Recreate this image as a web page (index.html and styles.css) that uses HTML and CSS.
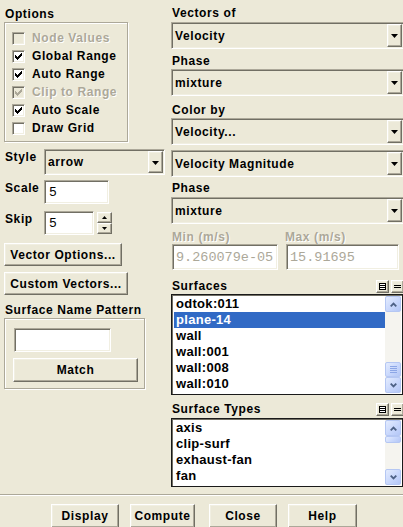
FILE: index.html
```html
<!DOCTYPE html>
<html>
<head>
<meta charset="utf-8">
<link rel="stylesheet" href="styles.css">
</head>
<body>
<div class="win">
  <div class="main">
    <div class="left">
      <div class="lbl lbl-options">Options</div>
      <div class="group opts">
        <div class="chk disabled"><span class="box"></span><span>Node Values</span></div>
        <div class="chk"><span class="box"><svg width="7" height="7" viewBox="0 0 7 7"><path d="M0 2h1v3H0zM1 3h1v3H1zM2 4h1v3H2zM3 3h1v3H3zM4 2h1v3H4zM5 1h1v3H5zM6 0h1v3H6z"/></svg></span><span>Global Range</span></div>
        <div class="chk"><span class="box"><svg width="7" height="7" viewBox="0 0 7 7"><path d="M0 2h1v3H0zM1 3h1v3H1zM2 4h1v3H2zM3 3h1v3H3zM4 2h1v3H4zM5 1h1v3H5zM6 0h1v3H6z"/></svg></span><span>Auto Range</span></div>
        <div class="chk disabled"><span class="box"><svg width="7" height="7" viewBox="0 0 7 7"><path d="M0 2h1v3H0zM1 3h1v3H1zM2 4h1v3H2zM3 3h1v3H3zM4 2h1v3H4zM5 1h1v3H5zM6 0h1v3H6z"/></svg></span><span>Clip to Range</span></div>
        <div class="chk"><span class="box"><svg width="7" height="7" viewBox="0 0 7 7"><path d="M0 2h1v3H0zM1 3h1v3H1zM2 4h1v3H2zM3 3h1v3H3zM4 2h1v3H4zM5 1h1v3H5zM6 0h1v3H6z"/></svg></span><span>Auto Scale</span></div>
        <div class="chk"><span class="box"></span><span>Draw Grid</span></div>
      </div>

      <div class="row row-style">
        <span class="lbl rlbl">Style</span>
        <div class="select sel-style"><span class="sel-text">arrow</span><span class="arrow raised"><svg width="7" height="4" viewBox="0 0 7 4"><path d="M0 0h7L3.5 4z"/></svg></span></div>
      </div>
      <div class="row row-scale">
        <span class="lbl rlbl">Scale</span>
        <div class="entry ent-scale">5</div>
      </div>
      <div class="row row-skip">
        <span class="lbl rlbl">Skip</span>
        <div class="entry ent-skip">5</div>
        <div class="spin">
          <span class="spin-b raised"><svg width="5" height="3" viewBox="0 0 5 3"><path d="M2.5 0L5 3H0z"/></svg></span>
          <span class="spin-b raised"><svg width="5" height="3" viewBox="0 0 5 3"><path d="M0 0h5L2.5 3z"/></svg></span>
        </div>
      </div>
      <button class="btn raised btn-vec">Vector Options...</button>
      <button class="btn raised btn-cust">Custom Vectors...</button>
      <div class="lbl lbl-pattern">Surface Name Pattern</div>
      <div class="group pattern">
        <div class="entry ent-pattern"></div>
        <button class="btn raised btn-match">Match</button>
      </div>
    </div>

    <div class="right">
      <div class="lbl rl rl-1">Vectors of</div>
      <div class="select sel-1"><span class="sel-text">Velocity</span><span class="arrow raised"><svg width="7" height="4" viewBox="0 0 7 4"><path d="M0 0h7L3.5 4z"/></svg></span></div>
      <div class="lbl rl rl-2">Phase</div>
      <div class="select sel-2"><span class="sel-text">mixture</span><span class="arrow raised"><svg width="7" height="4" viewBox="0 0 7 4"><path d="M0 0h7L3.5 4z"/></svg></span></div>
      <div class="lbl rl rl-3">Color by</div>
      <div class="select sel-3"><span class="sel-text">Velocity...</span><span class="arrow raised"><svg width="7" height="4" viewBox="0 0 7 4"><path d="M0 0h7L3.5 4z"/></svg></span></div>
      <div class="select sel-4"><span class="sel-text">Velocity Magnitude</span><span class="arrow raised"><svg width="7" height="4" viewBox="0 0 7 4"><path d="M0 0h7L3.5 4z"/></svg></span></div>
      <div class="lbl rl rl-4">Phase</div>
      <div class="select sel-5"><span class="sel-text">mixture</span><span class="arrow raised"><svg width="7" height="4" viewBox="0 0 7 4"><path d="M0 0h7L3.5 4z"/></svg></span></div>
      <div class="minmax-l">
        <span class="lbl dis-text">Min (m/s)</span>
        <span class="lbl dis-text">Max (m/s)</span>
      </div>
      <div class="minmax">
        <div class="entry mono ent-min">9.260079e-05</div>
        <div class="entry mono ent-max">15.91695</div>
      </div>

      <div class="list-head lh-1">
        <span class="lbl">Surfaces</span>
        <span class="mini raised"><svg width="7" height="7" viewBox="0 0 7 7"><path d="M0 0h7v7H0z" fill="#000"/><path d="M1 1h5v1H1zM1 3h5v1H1zM1 5h5v1H1z" fill="#fff"/></svg></span>
        <span class="mini raised"><svg width="7" height="5" viewBox="0 0 7 5"><path d="M0 1h7v1H0zM0 3h7v1H0z"/></svg></span>
      </div>
      <div class="list list-1">
        <div class="items">
          <div class="item">odtok:011</div>
          <div class="item sel">plane-14</div>
          <div class="item">wall</div>
          <div class="item">wall:001</div>
          <div class="item">wall:008</div>
          <div class="item">wall:010</div>
        </div>
        <div class="sb">
          <span class="sbb"><svg width="7" height="5" viewBox="0 0 7 5"><polyline points="0.7,4.3 3.5,1.5 6.3,4.3" fill="none" stroke="#4d6185" stroke-width="1.8"/></svg></span>
          <span class="track t1"></span>
          <span class="sbb thumb th1"><svg width="7" height="7" viewBox="0 0 7 7"><path d="M0 0h7v1H0zM0 2h7v1H0zM0 4h7v1H0zM0 6h7v1H0z" fill="#8ca6e6"/></svg></span>
          <span class="sbb"><svg width="7" height="5" viewBox="0 0 7 5"><polyline points="0.7,0.7 3.5,3.5 6.3,0.7" fill="none" stroke="#4d6185" stroke-width="1.8"/></svg></span>
        </div>
      </div>

      <div class="list-head lh-2">
        <span class="lbl">Surface Types</span>
        <span class="mini raised"><svg width="7" height="7" viewBox="0 0 7 7"><path d="M0 0h7v7H0z" fill="#000"/><path d="M1 1h5v1H1zM1 3h5v1H1zM1 5h5v1H1z" fill="#fff"/></svg></span>
        <span class="mini raised"><svg width="7" height="5" viewBox="0 0 7 5"><path d="M0 1h7v1H0zM0 3h7v1H0z"/></svg></span>
      </div>
      <div class="list list-2">
        <div class="items">
          <div class="item">axis</div>
          <div class="item">clip-surf</div>
          <div class="item">exhaust-fan</div>
          <div class="item">fan</div>
        </div>
        <div class="sb">
          <span class="sbb"><svg width="7" height="5" viewBox="0 0 7 5"><polyline points="0.7,4.3 3.5,1.5 6.3,4.3" fill="none" stroke="#4d6185" stroke-width="1.8"/></svg></span>
          <span class="sbb thumb th2"></span>
          <span class="track t2"></span>
          <span class="sbb"><svg width="7" height="5" viewBox="0 0 7 5"><polyline points="0.7,0.7 3.5,3.5 6.3,0.7" fill="none" stroke="#4d6185" stroke-width="1.8"/></svg></span>
        </div>
      </div>
    </div>
  </div>

  <div class="footer">
    <button class="btn raised fb fb-display">Display</button>
    <button class="btn raised fb fb-compute">Compute</button>
    <button class="btn raised fb fb-close">Close</button>
    <button class="btn raised fb fb-help">Help</button>
  </div>
</div>
</body>
</html>
```

FILE: styles.css
```css
html, body {
  margin: 0;
  padding: 0;
  background: #ece9d8;
}
body {
  font-family: "Liberation Sans", Arial, sans-serif;
  font-weight: bold;
  font-size: 12px;
  letter-spacing: 0.6px;
  color: #000;
}
.win {
  width: 403px;
  height: 527px;
  overflow: hidden;
  background: #ece9d8;
}
.main {
  display: flex;
  height: 494px;
}
.left {
  width: 171px;
  flex-shrink: 0;
  box-sizing: border-box;
  padding-left: 4px;
  display: flex;
  flex-direction: column;
  align-items: flex-start;
}
.right {
  width: 233px;
  flex-shrink: 0;
  display: flex;
  flex-direction: column;
}
.lbl {
  display: block;
  height: 14px;
  line-height: 14px;
  white-space: nowrap;
}

/* 3D styles */
.raised {
  box-sizing: border-box;
  background: #ece9d8;
  border: 1px solid;
  border-color: #fff #716f64 #716f64 #fff;
  box-shadow: inset -1px -1px 0 #aca899, inset 1px 1px 0 #f1efe2;
}
.sunken {
  border: 1px solid;
  border-color: #aca899 #fff #fff #aca899;
}

/* group boxes */
.group {
  box-sizing: border-box;
  border: 1px solid #aca899;
  box-shadow: inset 1px 1px 0 #fff, 1px 1px 0 #fff;
}
.lbl-options { margin-top: 7px; margin-left: 1px; }
.opts {
  margin-top: 1px;
  width: 124px;
  height: 120px;
  padding: 6px 0 0 7px;
}
.chk {
  display: flex;
  align-items: center;
  height: 18px;
  white-space: nowrap;
}
.chk .box {
  box-sizing: border-box;
  width: 13px;
  height: 13px;
  margin-right: 7px;
  background: #fff;
  border: 1px solid;
  border-color: #aca899 #fff #fff #aca899;
  box-shadow: inset 1px 1px 0 #716f64, inset -1px -1px 0 #f1efe2;
  display: flex;
  align-items: center;
  justify-content: center;
}
.chk .box svg { fill: #000; display: block; }
.chk.disabled { color: #aca899; text-shadow: 1px 1px 0 #fff; }
.chk.disabled .box { background: #ece9d8; }
.chk.disabled .box svg { fill: #aca899; }

/* rows on the left */
.row {
  display: flex;
  align-items: flex-start;
}
.rlbl { width: 40px; margin-top: 1px; padding-left: 1px; box-sizing: border-box; }
.row-style { margin-top: 7px; }
.row-scale { margin-top: 5px; }
.row-skip { margin-top: 7px; }

/* selects */
.select {
  box-sizing: border-box;
  height: 27px;
  border: 1px solid;
  border-color: #aca899 #fff #fff #aca899;
  box-shadow: inset 1px 1px 0 #716f64, inset -1px -1px 0 #f1efe2;
  padding: 1px;
  display: flex;
  align-items: stretch;
  background: #ece9d8;
}
.sel-text {
  flex: 1;
  display: flex;
  align-items: center;
  padding-left: 2px;
  white-space: nowrap;
  overflow: hidden;
}
.arrow {
  width: 15px;
  display: flex;
  align-items: center;
  justify-content: center;
  padding-top: 1px;
}
.arrow svg { display: block; fill: #000; }
.sel-style { width: 121px; height: 26px; }

/* entries */
.entry {
  box-sizing: border-box;
  background: #fff;
  border: 1px solid;
  border-color: #aca899 #fff #fff #aca899;
  box-shadow: inset 1px 1px 0 #716f64, inset -1px -1px 0 #f1efe2;
  font-family: "Liberation Mono", "Courier New", monospace;
  font-weight: normal;
  font-size: 13px;
  letter-spacing: 0;
  padding-left: 4px;
  display: flex;
  align-items: center;
}
.ent-scale { width: 65px; height: 24px; }
.ent-skip { width: 50px; height: 24px; }
.spin {
  margin-left: 3px;
  margin-top: 1px;
  display: flex;
  flex-direction: column;
}
.spin-b {
  width: 15px;
  height: 11px;
  display: flex;
  align-items: center;
  justify-content: center;
}
.spin-b svg { display: block; fill: #000; }

/* buttons */
.btn {
  font: inherit;
  letter-spacing: inherit;
  color: #000;
  padding: 0;
  margin: 0;
  text-align: center;
  line-height: 14px;
  white-space: nowrap;
}
.btn-vec { margin-top: 8px; width: 118px; height: 23px; }
.btn-cust { margin-top: 6px; width: 124px; height: 23px; }
.lbl-pattern { margin-top: 8px; margin-left: 1px; }
.pattern {
  margin-top: 1px;
  width: 141px;
  height: 71px;
  padding: 9px 0 0 8px;
  display: flex;
  flex-direction: column;
  align-items: flex-start;
}
.ent-pattern { width: 97px; height: 24px; margin-left: 1px; }
.btn-match { margin-top: 6px; width: 125px; height: 24px; }

/* right column */
.rl { padding-left: 1px; }
.rl-1 { margin-top: 6px; }
.sel-1 { margin-top: 2px; }
.rl-2 { margin-top: 5px; }
.sel-2 { margin-top: 1px; }
.rl-3 { margin-top: 7px; }
.sel-3 { margin-top: 1px; }
.sel-4 { margin-top: 5px; }
.rl-4 { margin-top: 4px; }
.sel-5 { margin-top: 2px; }

.dis-text { color: #aca899; text-shadow: 1px 1px 0 #fff; }
.minmax-l {
  margin-top: 6px;
  display: grid;
  grid-template-columns: 113px 1fr;
  padding-left: 1px;
}
.minmax {
  display: grid;
  grid-template-columns: 106px 113px;
  column-gap: 8px;
  padding-left: 1px;
}
.minmax .entry { height: 26px; color: #aca899; padding-left: 3px; font-size: 13.5px; }

.list-head {
  display: flex;
  align-items: flex-start;
  height: 14px;
}
.list-head .lbl { flex: 1; padding-left: 1px; }
.lh-1 { margin-top: 9px; }
.lh-2 { margin-top: 7px; }
.mini {
  width: 13px;
  height: 13px;
  margin-top: 1px;
  margin-right: 2px;
  display: flex;
  align-items: center;
  justify-content: center;
}
.mini svg { display: block; }
.mini:last-child { margin-right: 0; }

.list {
  box-sizing: border-box;
  border: 1px solid #1a1a1a;
  box-shadow: inset 1px 1px 0 #716f64;
  background: #fff;
  padding: 1px 1px 1px 1px;
  display: flex;
  width: 232px;
}
.list-1 { margin-top: 1px; height: 101px; }
.list-2 { margin-top: 2px; height: 69px; }
.items {
  flex: 1;
  padding-left: 1px;
  overflow: hidden;
}
.item {
  height: 16px;
  line-height: 16px;
  padding-left: 2px;
  font-size: 13px;
  letter-spacing: 0.3px;
  white-space: nowrap;
}
.item.sel { background: #316ac5; color: #fff; }

.sb {
  width: 16px;
  display: flex;
  flex-direction: column;
  background: #f5f4ef;
}
.sbb {
  box-sizing: border-box;
  height: 16px;
  flex-shrink: 0;
  border: 1px solid #b5c7f3;
  border-radius: 2px;
  background: linear-gradient(135deg, #e4ecfe 0%, #c8d7fc 55%, #b4c7f6 100%);
  display: flex;
  align-items: center;
  justify-content: center;
}
.sbb svg { display: block; }
.track { flex: 1; }
.th1 { height: 15px; }
.th2 { height: 7px; }

/* footer */
.footer {
  border-top: 1px solid #aca899;
  box-shadow: inset 0 1px 0 #fff;
  padding-top: 9px;
  display: flex;
  align-items: flex-start;
  height: 32px;
}
.fb { height: 24px; }
.fb-display { margin-left: 51px; width: 68px; }
.fb-compute { margin-left: 11px; width: 65px; }
.fb-close { margin-left: 14px; width: 68px; }
.fb-help { margin-left: 11px; width: 69px; }
```
